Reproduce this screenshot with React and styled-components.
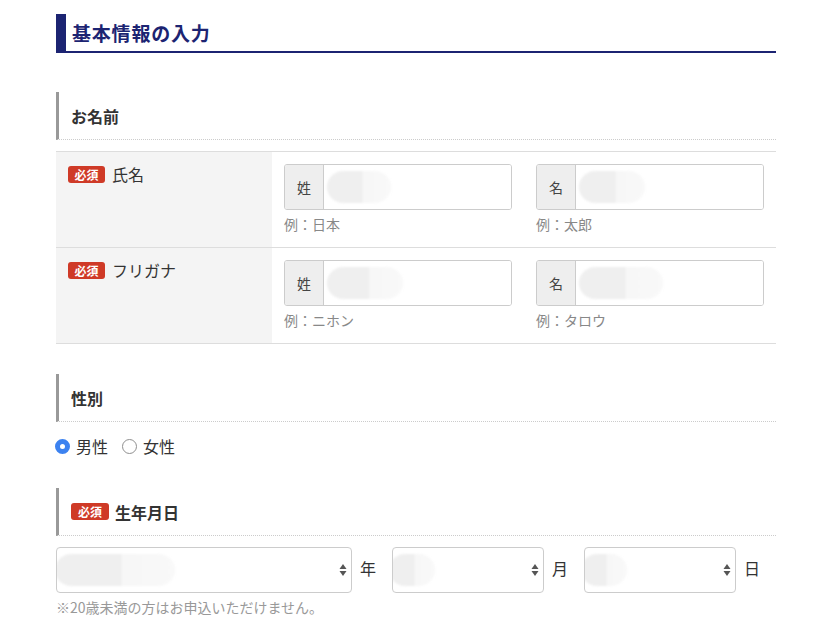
import React from "react";
import styled, { createGlobalStyle } from "styled-components";

const GlobalStyle = createGlobalStyle`
	body {
		margin: 0;
		background: #ffffff;
		font-family: "Noto Sans CJK JP", "Noto Sans", sans-serif;
		color: #333333;
	}
`;

export default function App() {
	return (
		<>
			<GlobalStyle />
			<Page>
				<Title>基本情報の入力</Title>

				<SectionHead>お名前</SectionHead>
				<Table>
					<Row>
						<Th>
							<Badge>必須</Badge>
							<ThLabel>氏名</ThLabel>
						</Th>
						<Td>
							<Field>
								<InputGroup>
									<Prefix>姓</Prefix>
									<InputBox>
										<Blur $w={64} />
									</InputBox>
								</InputGroup>
								<Hint>例：日本</Hint>
							</Field>
							<Field>
								<InputGroup>
									<Prefix>名</Prefix>
									<InputBox>
										<Blur $w={66} />
									</InputBox>
								</InputGroup>
								<Hint>例：太郎</Hint>
							</Field>
						</Td>
					</Row>
					<Row>
						<Th>
							<Badge>必須</Badge>
							<ThLabel>フリガナ</ThLabel>
						</Th>
						<Td>
							<Field>
								<InputGroup>
									<Prefix>姓</Prefix>
									<InputBox>
										<Blur $w={76} />
									</InputBox>
								</InputGroup>
								<Hint>例：ニホン</Hint>
							</Field>
							<Field>
								<InputGroup>
									<Prefix>名</Prefix>
									<InputBox>
										<Blur $w={84} />
									</InputBox>
								</InputGroup>
								<Hint>例：タロウ</Hint>
							</Field>
						</Td>
					</Row>
				</Table>

				<SectionHead $top={30}>性別</SectionHead>
				<Radios>
					<RadioLabel>
						<RadioDot $checked />
						男性
					</RadioLabel>
					<RadioLabel>
						<RadioDot />
						女性
					</RadioLabel>
				</Radios>

				<SectionHead $top={32}>
					<Badge $head>必須</Badge>
					生年月日
				</SectionHead>
				<DateRow>
					<Select $w={296}>
						<Blur $w={120} $left={-2} />
						<Arrows />
					</Select>
					<Unit>年</Unit>
					<Select $w={152}>
						<Blur $w={46} $left={-4} />
						<Arrows />
					</Select>
					<Unit>月</Unit>
					<Select $w={152}>
						<Blur $w={46} $left={-4} />
						<Arrows />
					</Select>
					<Unit>日</Unit>
				</DateRow>
				<Note>※20歳未満の方はお申込いただけません。</Note>
			</Page>
		</>
	);
}

function Arrows() {
	return (
		<ArrowIcon width="8" height="16" viewBox="0 0 8 16">
			<path d="M4 2 L7.5 7 L0.5 7 Z" fill="#555" />
			<path d="M4 14 L7.5 9 L0.5 9 Z" fill="#555" />
		</ArrowIcon>
	);
}

const Page = styled.div`
	width: 720px;
	margin-left: 56px;
	padding-top: 14px;
	padding-bottom: 20px;
`;

const Title = styled.h2`
	margin: 0;
	height: 36px;
	display: flex;
	align-items: center;
	padding-left: 6px;
	padding-bottom: 1px;
	box-sizing: content-box;
	border-left: 10px solid #1c2472;
	border-bottom: 2px solid #1c2472;
	color: #1c2472;
	font-size: 19px;
	font-weight: 700;
	letter-spacing: 0.8px;
`;

const SectionHead = styled.h3`
	margin: ${(p) => p.$top || 39}px 0 0;
	height: 47px;
	box-sizing: content-box;
	display: flex;
	align-items: center;
	gap: 6px;
	padding-left: 12px;
	border-left: 3px solid #999999;
	border-bottom: 1px dotted #cccccc;
	font-size: 16px;
	line-height: 20px;
	font-weight: 700;
	color: #333333;
`;

const Table = styled.div`
	margin-top: 11px;
	border-top: 1px solid #dddddd;
`;

const Row = styled.div`
	display: flex;
	height: 95px;
	border-bottom: 1px solid #dddddd;
`;

const Th = styled.div`
	width: 216px;
	background: #f4f4f4;
	padding: 11px 12px;
	box-sizing: border-box;
	display: flex;
	align-items: flex-start;
	gap: 7px;
`;

const ThLabel = styled.span`
	font-size: 16px;
	line-height: 22px;
	color: #333333;
`;

const Badge = styled.span`
	display: inline-flex;
	align-items: center;
	justify-content: center;
	width: ${(p) => (p.$head ? 38 : 37)}px;
	height: 17px;
	margin-top: ${(p) => (p.$head ? 0 : 3)}px;
	background: #cf3a27;
	color: #ffffff;
	border-radius: 3px;
	font-size: 12px;
	line-height: 17px;
	font-weight: 700;
	flex-shrink: 0;
`;

const Td = styled.div`
	flex: 1;
	display: flex;
	gap: 24px;
	padding: 12px 12px;
`;

const Field = styled.div`
	width: 228px;
`;

const InputGroup = styled.div`
	display: flex;
	height: 46px;
	box-sizing: border-box;
	border: 1px solid #cccccc;
	border-radius: 3px;
	overflow: hidden;
`;

const Prefix = styled.span`
	width: 38px;
	display: flex;
	align-items: center;
	justify-content: center;
	background: #eeeeee;
	border-right: 1px solid #cccccc;
	font-size: 14px;
	color: #444444;
`;

const InputBox = styled.div`
	flex: 1;
	position: relative;
	background: #ffffff;
`;

const Blur = styled.span`
	position: absolute;
	left: ${(p) => (p.$left != null ? p.$left : 3)}px;
	top: 50%;
	transform: translateY(-50%);
	width: ${(p) => p.$w}px;
	height: 32px;
	border-radius: 16px;
	background: linear-gradient(90deg, #efefef 0%, #efefef 55%, #f7f7f7 56%, #f9f9f9 100%);
	filter: blur(1px);
`;

const Hint = styled.div`
	margin-top: 4px;
	font-size: 14px;
	line-height: 20px;
	color: #888888;
`;

const Radios = styled.div`
	display: flex;
	gap: 14px;
	margin-top: 14px;
	margin-left: -1px;
`;

const RadioLabel = styled.label`
	display: flex;
	align-items: center;
	gap: 6px;
	font-size: 16px;
	line-height: 20px;
	color: #333333;
`;

const RadioDot = styled.span`
	width: 15px;
	height: 15px;
	box-sizing: border-box;
	border-radius: 50%;
	border: ${(p) => (p.$checked ? "5px solid #3c82f0" : "1px solid #8f8f8f")};
	background: #ffffff;
`;

const DateRow = styled.div`
	display: flex;
	align-items: center;
	margin-top: 11px;
`;

const Select = styled.div`
	position: relative;
	width: ${(p) => p.$w}px;
	height: 46px;
	box-sizing: border-box;
	border: 1px solid #cccccc;
	border-radius: 4px;
	background: #ffffff;
	overflow: hidden;
`;

const ArrowIcon = styled.svg`
	position: absolute;
	right: 4px;
	top: 14px;
`;

const Unit = styled.span`
	width: 40px;
	padding-left: 8px;
	box-sizing: border-box;
	margin-top: -4px;
	font-size: 16px;
	color: #333333;
`;

const Note = styled.p`
	margin: 5px 0 0;
	font-size: 14px;
	line-height: 18px;
	font-weight: 400;
	color: #999999;
`;
